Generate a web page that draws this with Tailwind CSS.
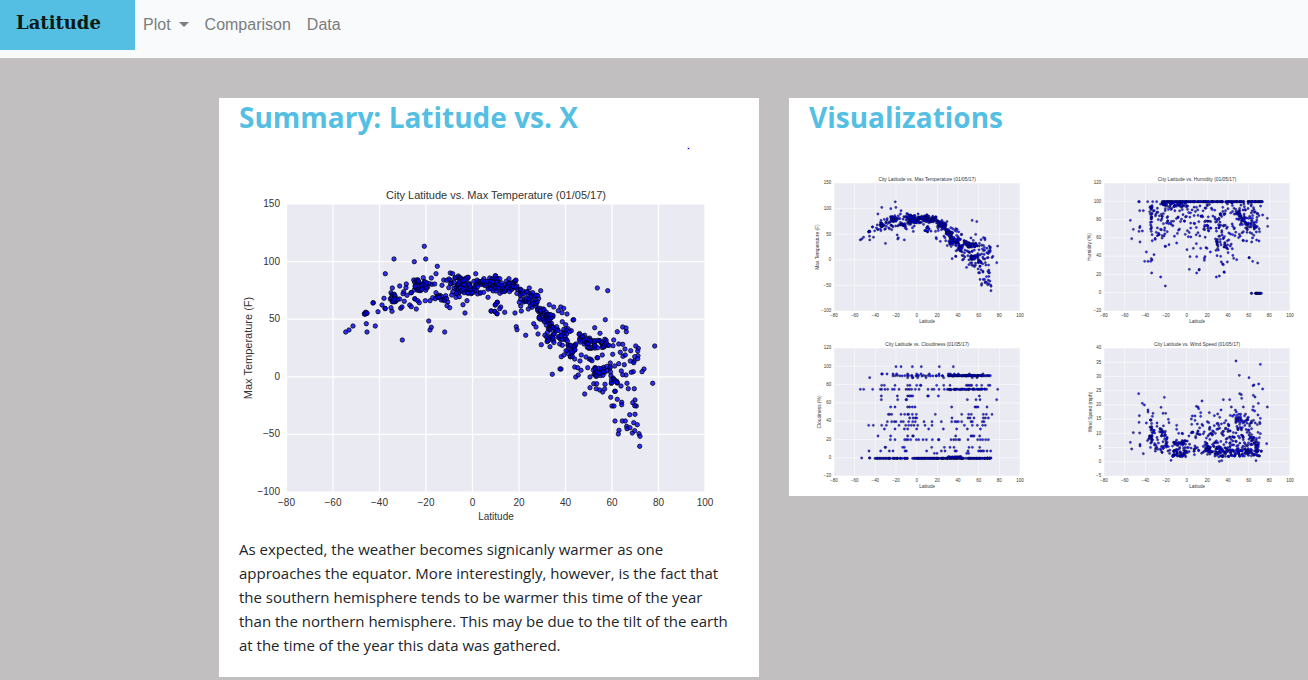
<!DOCTYPE html>
<html lang="en">
<head>
<meta charset="utf-8">
<title>Latitude</title>
<meta name="viewport" content="width=device-width, initial-scale=1">
<script src="https://cdn.jsdelivr.net/npm/@tailwindcss/browser@4"></script>
</head>
<body class="min-h-screen overflow-x-hidden bg-[#c2bfc0] font-['Segoe_UI','Open_Sans',sans-serif] text-[15px] text-[#212529]">
<nav class="flex items-start bg-[#f8fafb] pb-2 font-['Liberation_Sans',sans-serif] text-base leading-6 text-[#7c7d7d]">
  <a href="#" class="flex h-[50px] w-[135px] items-start bg-[#55bfe3] px-4 pt-[10px] font-['Georgia','DejaVu_Serif',serif] text-lg leading-[26px] font-bold text-[#0a1a14]">Latitude</a>
  <ul class="flex pt-[5px]">
    <li><button type="button" aria-haspopup="true" class="flex items-center gap-2 p-2">Plot
      <svg class="mb-[2px] h-[5px] w-[10px]" viewBox="0 0 10 5" fill="currentColor" aria-hidden="true"><path d="M0 0H10L5 5Z"/></svg></button></li>
    <li><a href="#comparison" class="block p-2">Comparison</a></li>
    <li><a href="#data" class="block p-2">Data</a></li>
  </ul>
</nav>
<main class="flex items-start gap-[30px] pt-10 pl-[219px]">
  <section class="relative w-[540px] shrink-0 bg-white pb-5">
    <h1 class="px-5 text-[28px] leading-[38px] font-bold text-[#55bfe3]">Summary: Latitude vs. X</h1>
    <span class="absolute top-[50px] left-[469px] size-px bg-[#0000ff] outline outline-[#0000ff]/15"></span>
    <svg id="summary" class="mt-8 block w-full" viewBox="0 0 540 360" role="img" aria-label="City latitude vs. max temperature"></svg>
    <p class="pt-[9px] pr-6 pl-5 leading-6">As expected, the weather becomes signicanly warmer as one approaches the equator. More interestingly, however, is the fact that the southern hemisphere tends to be warmer this time of the year than the northern hemisphere. This may be due to the tilt of the earth at the time of the year this data was gathered.</p>
  </section>
  <section class="w-[540px] shrink-0 bg-white pb-1">
    <h2 class="px-5 text-[28px] leading-[38px] font-bold text-[#55bfe3]">Visualizations</h2>
    <div class="mt-[31px] grid grid-cols-2 gap-x-[30px] gap-y-[5px] px-[15px]">
      <a href="#temperature"><svg id="temperature" class="block w-full" viewBox="0 0 540 360" role="img" aria-label="Max temperature"></svg></a>
      <a href="#humidity"><svg id="humidity" class="block w-full" viewBox="0 0 540 360" role="img" aria-label="Humidity"></svg></a>
      <a href="#cloudiness"><svg id="cloudiness" class="block w-full" viewBox="0 0 540 360" role="img" aria-label="Cloudiness"></svg></a>
      <a href="#wind"><svg id="wind" class="block w-full" viewBox="0 0 540 360" role="img" aria-label="Wind speed"></svg></a>
    </div>
  </section>
</main>
<script>
// Layers hold an origin and scale, single points, and bands [x1, y1, x2, y2, spreadX, spreadY, count].
const temperature = {
  title: 'City Latitude vs. Max Temperature (01/05/17)', label: 'Max Temperature (F)', labelX: 33, ticks: [-100, -50, 0, 50, 100, 150],
  layers: [{ x: 61, y: 33, k: 1 / 3,
    points: '433,136 342,174 403,182 437,174 472,196 316,218 468,218 430,230 454,231 587,218 511,216 518,218 535,225 565,229 647,225 629,231 359,255 379,249 337,261 401,237 414,239 404,244 417,255 435,250 443,258 456,250 464,249 378,260 371,272 369,278 333,275 381,283 343,280 312,292 331,294 343,290 359,294 373,301 394,275 280,305 279,306 306,312 315,322 316,323 333,320 336,331 294,332 362,322 366,318 389,312 394,317 409,324 405,294 404,293 413,299 418,305 436,299 450,299 458,290 259,368 286,375 261,393 219,375 207,387 197,393 367,417 446,360 454,379 450,387 494,393 479,283 468,275 473,289 484,297 484,286 497,284 503,303 501,314 509,320 492,294 486,253 491,237 500,238 515,282 528,289 538,287 549,311 555,336 561,299 624,289 634,330 645,332 651,338 652,304 646,312 413,268 393,275 403,267 423,268 437,268',
    bands: [[255,336,260,336,4,4,6],[337,292,346,290,8,12,18],[402,252,445,252,6,17,24],[510,250,570,250,8,22,40],[530,258,590,258,12,22,36],[590,254,660,254,8,23,42],[462,287,500,291,6,9,9]] },
  { x: 271, y: 73, k: 1 / 3,
    points: '16,104 57,113 118,141 152,149 322,141 353,149 22,184 16,191 32,198 3,210 14,211 21,218 29,203 44,214 75,216 94,210 92,195 115,204 126,199 79,257 81,266 107,283 131,248 138,258 144,279 154,311 180,317 209,309 217,313 178,191 191,198 212,198 221,202 205,209 216,215 231,219 249,237 251,236 217,242 227,251 234,263 244,269 346,236 314,260 330,277 382,272 398,258 408,261 409,272 371,297 386,309 398,310 369,314 353,313 368,340 391,334 405,324 399,346 406,342 422,329 437,315 445,322 443,330 444,344 434,347 432,361 431,365 421,360 443,353 494,315 488,427 462,384 456,392 430,392 424,394 408,402 398,401 394,390 403,371 386,368 374,375 361,366 214,347 222,342 187,400 213,384 210,384 254,378 263,380 273,388 257,408 265,402 284,459 254,354 270,360 274,342 288,348 298,354 302,355 306,359 321,350 323,350 337,342 293,380 310,387 326,382 300,408 312,400 300,440 311,428 320,428 319,443 329,447 338,453 345,430 344,444 362,469 374,451 376,451 382,475 395,484 395,491 366,495 372,495 411,427 393,435 415,443 433,443 435,477 428,485 439,495 434,494 419,521 435,520 375,540 397,540 406,540 387,568 385,579 410,556 411,563 420,560 431,545 442,551 427,576 434,569 447,578 450,586 449,616 364,427 382,426 365,425',
    bands: [[0,137,25,137,6,18,16],[25,135,85,135,6,18,42],[85,162,150,184,6,20,46],[145,213,190,240,6,20,36],[168,260,238,286,6,20,36],[168,290,188,296,8,10,12],[235,328,252,328,10,20,22],[268,288,300,306,8,13,22],[290,312,355,306,6,12,32],[310,395,360,390,8,16,26],[368,412,382,418,6,8,8]] }]
};
const humidity = {
  title: 'City Latitude vs. Humidity (01/05/17)', label: 'Humidity (%)', labelX: 38, ticks: [-20, 0, 20, 40, 60, 80, 100, 120],
  layers: [{ x: 13.5, y: 9, k: .75,
    points: '178,92 176,92 203,92 218,92 230,92 505,92 547,92 515,367 514,367 151,148 155,203 160,175 179,170 180,166 180,213 187,180 177,181 179,119 190,119 199,243 194,271 204,271 212,271 214,263 216,267 222,251 215,306 242,318 256,345 255,226 257,226 267,221 290,216 321,236 340,232 330,257 350,257 328,295 350,306 357,297 358,295 362,232 378,230 381,232 391,243 375,257 373,262 373,268 409,318 418,315 432,303 433,304 411,254 422,256 408,238 424,273 428,279 430,281 442,273 461,262 470,266 507,260 508,260 518,271 533,276 562,142 563,166 548,132 537,210 530,207 515,213 500,210 349,218',
    bands: [[247,92,432,92,3,0,95],[436,92,492,92,2,0,30],[503,92,547,92,2,0,26],[525,367,543,367,2,0,16],[214,98,214,190,3,6,18],[206,125,243,125,4,26,18],[222,190,258,180,6,20,18],[245,101,318,101,4,8,48],[245,125,265,130,8,30,14],[265,120,400,120,6,22,34],[265,158,380,165,8,38,38],[374,155,390,165,6,20,16],[405,120,425,185,14,12,26],[409,200,412,236,4,6,12],[425,205,455,240,10,14,20],[425,113,540,117,6,20,45],[474,130,496,160,8,14,36],[495,156,535,160,6,22,26],[420,180,535,185,8,26,42]] }]
};
const cloudiness = {
  title: 'City Latitude vs. Cloudiness (01/05/17)', label: 'Cloudiness (%)', labelX: 38, ticks: [-20, 0, 20, 40, 60, 80, 100, 120],
  layers: [{ x: 2.25, y: 9, k: .75,
    rows: { 92: '273 288 322 349 403 445', 114: '230 232 246 264 275 308 335 348 373 402 430 436 448 460 493 534', 125: '194 308 322 324 338 363 416 502 516', 148: '230 238 270 308 315 335 346 348 395 416 435 484 488 492 497 500 515 530 550 555', 160: '166 176 203 226 230 240 248 262 268 282 303 309 314 320 331 342 369 381 387 402 418 578', 180: '229 277 308 313 318 323 368 370 400 523', 191: '229 278 303 305 487 513 525 575', 213: '257 270 308 314 322 330 440 510 514 519 546', 235: '250 254 260 288 299 308 311 322 334 391 470 491 499 535 544 561', 246: '314 324 331 335 441 489 495 507 535 541 550', 257: '247 260 268 273 288 295 311 323 331 357 381 409 440 450 455 460 470 498 502 532 537', 268: '191 205 230 244 282 302 311 319 327 338 360 381 478 502 517 533 541', 279: '238 270 298 308 335 371 415 455 487 526', 300: '219 257 308 323 325 452 498 502 507 524', 311: '256 270 299 304 309 317 334 341 354 364 382 400 402 438 446 452 460 464 489 518 526 533 542 550', 334: '240 242 293 298 380 418 435 447 492 502 524', 345: '192 227 253 264 300 304 365 409 420 450 454 489 521 526 531 536 546 557', 352: '388 396 485 491', 366: '170 193 195 547 553 558' },
    bands: [[262,119,420,119,3,1,24],[428,119,535,119,3,1,80],[542,119,556,119,2,0,6],[425,160,545,160,3,1,42],[208,367,310,367,3,0,38],[325,367,480,367,3,0,85],[430,363,470,363,2,1,18],[485,367,557,367,2,0,36]] }]
};
const wind = {
  title: 'City Latitude vs. Wind Speed (01/05/17)', label: 'Wind Speed (mph)', labelX: 40, ticks: [-5, 0, 5, 10, 15, 20, 25, 30, 35, 40],
  layers: [{ x: 13.5, y: 9, k: .75,
    points: '468,75 541,85 478,118 507,125 536,144 522,147 519,149 548,159 479,173 484,176 520,178 525,183 485,187 430,191 449,191 366,195 253,184 176,173 187,202 193,207 204,222 204,228 243,214 349,211 354,213 356,218 454,213 490,213 520,212 535,202 562,213 423,222 518,222 524,225 151,319 155,339 160,290 178,239 177,259 179,291 180,325 180,330 190,353 560,323 199,261 231,261 219,232 249,232 257,232 217,241 231,271 265,250 267,260 290,268 290,280 296,292 306,292 308,293 337,240 345,240 362,230 388,230 413,234 403,239 419,244 362,241 334,249 345,253 352,264 382,257 386,260 366,265 335,265 541,247 539,259 540,263 534,289 541,293 538,305 418,376 425,374 528,374 273,373',
    bands: [[213,245,214,330,3,6,18],[202,290,235,315,6,24,20],[245,275,258,325,8,12,30],[222,335,270,345,8,14,18],[275,351,320,352,6,11,42],[280,328,322,332,6,18,38],[328,290,365,290,8,16,14],[325,335,365,350,8,16,16],[375,325,392,350,6,16,34],[375,290,405,310,10,24,18],[400,345,445,350,8,15,56],[400,292,465,295,6,34,38],[450,351,540,351,6,10,74],[445,320,535,325,6,22,52],[470,222,482,255,9,8,10],[470,275,515,280,10,28,40],[510,305,540,340,8,12,18],[425,250,535,255,6,22,22]] }]
};

function drawChart(id, chart, radius) {
  let seed = 97;
  const random = () => {
    seed = (seed + 0x6D2B79F5) | 0;
    let t = Math.imul(seed ^ (seed >>> 15), 1 | seed);
    t = (t + Math.imul(t ^ (t >>> 7), 61 | t)) ^ t;
    return ((t ^ (t >>> 14)) >>> 0) / 4294967296;
  };
  const left = 67.5, width = 418.5, top = 36, height = 288;
  let out = `<rect x="${left}" y="${top}" width="${width}" height="${height}" fill="#eaeaf2"/>`;
  let grid = '', labels = '';
  for (let i = 0; i <= 9; i++) {
    const x = left + width * i / 9;
    grid += `M${x} ${top}v${height}`;
    labels += `<text x="${x}" y="338" text-anchor="middle">${String(-80 + 20 * i).replace('-', '−')}</text>`;
  }
  chart.ticks.forEach((tick, i) => {
    const y = top + height - height * i / (chart.ticks.length - 1);
    grid += `M${left} ${y}h${width}`;
    labels += `<text x="61" y="${y + 3}" text-anchor="end">${String(tick).replace('-', '−')}</text>`;
  });
  out += `<path d="${grid}" stroke="#fff" stroke-width="1.2" fill="none"/>`;
  let dots = '';
  const dot = (l, x, y) => { dots += `<circle cx="${(l.x + x * l.k).toFixed(1)}" cy="${(l.y + y * l.k).toFixed(1)}" r="${radius}"/>`; };
  for (const l of chart.layers) {
    (l.points || '').split(' ').filter(Boolean).forEach(p => dot(l, ...p.split(',').map(Number)));
    for (const [y, xs] of Object.entries(l.rows || {})) xs.split(' ').forEach(x => dot(l, +x, +y));
    for (const [x1, y1, x2, y2, sx, sy, n] of l.bands) {
      for (let i = 0; i < n; i++) {
        const t = (i + random()) / n;
        dot(l, x1 + (x2 - x1) * t + (random() * 2 - 1) * sx, y1 + (y2 - y1) * t + (random() * 2 - 1) * sy);
      }
    }
  }
  out += `<g fill="#0000ff" fill-opacity=".8" stroke="#000" stroke-opacity=".8" stroke-width=".9">${dots}</g>`;
  out += `<g font-family="Liberation Sans, sans-serif" font-size="10" fill="#333">${labels}
    <g font-size="11"><text x="277" y="31" text-anchor="middle">${chart.title}</text>
    <text x="277" y="352" font-size="10" text-anchor="middle">Latitude</text>
    <text transform="translate(${chart.labelX} 180) rotate(-90)" text-anchor="middle">${chart.label}</text></g></g>`;
  document.getElementById(id).innerHTML = out;
}
drawChart('summary', temperature, 2.2);
drawChart('temperature', temperature, 2.6);
drawChart('humidity', humidity, 2.6);
drawChart('cloudiness', cloudiness, 2.6);
drawChart('wind', wind, 2.6);
</script>
</body>
</html>
